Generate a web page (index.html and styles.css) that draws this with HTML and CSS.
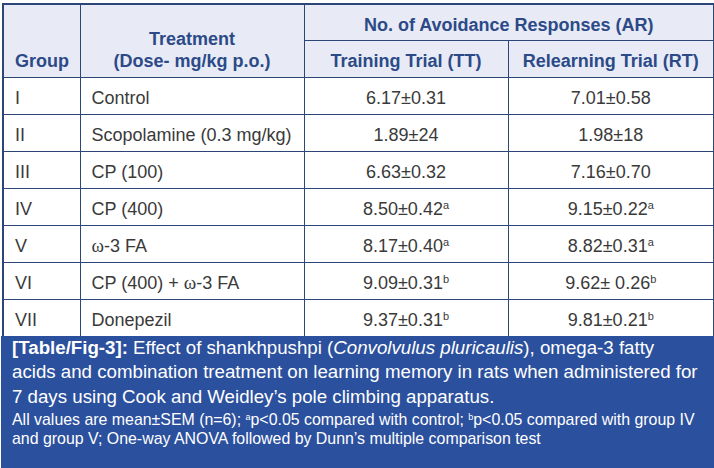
FILE: index.html
```html
<!DOCTYPE html>
<html>
<head>
<meta charset="utf-8">
<link rel="stylesheet" href="styles.css">
</head>
<body>
<div class="fig">
  <table class="data">
    <colgroup>
      <col class="c-group">
      <col class="c-treat">
      <col class="c-tt">
      <col class="c-rt">
    </colgroup>
    <thead>
      <tr class="r-top">
        <th rowspan="2" class="h-group">Group</th>
        <th rowspan="2" class="h-treat">Treatment<br>(Dose- mg/kg p.o.)</th>
        <th colspan="2" class="h-ar">No. of Avoidance Responses (AR)</th>
      </tr>
      <tr>
        <th class="h-sub">Training Trial (TT)</th>
        <th class="h-sub">Relearning Trial (RT)</th>
      </tr>
    </thead>
    <tbody>
      <tr><td>I</td><td>Control</td><td class="v">6.17±0.31</td><td class="v">7.01±0.58</td></tr>
      <tr><td>II</td><td>Scopolamine (0.3 mg/kg)</td><td class="v">1.89±24</td><td class="v">1.98±18</td></tr>
      <tr><td>III</td><td>CP (100)</td><td class="v">6.63±0.32</td><td class="v">7.16±0.70</td></tr>
      <tr><td>IV</td><td>CP (400)</td><td class="v">8.50±0.42<sup>a</sup></td><td class="v">9.15±0.22<sup>a</sup></td></tr>
      <tr><td>V</td><td><span class="om">ω</span>-3 FA</td><td class="v">8.17±0.40<sup>a</sup></td><td class="v">8.82±0.31<sup>a</sup></td></tr>
      <tr><td>VI</td><td>CP (400) + <span class="om">ω</span>-3 FA</td><td class="v">9.09±0.31<sup>b</sup></td><td class="v">9.62± 0.26<sup>b</sup></td></tr>
      <tr><td>VII</td><td>Donepezil</td><td class="v">9.37±0.31<sup>b</sup></td><td class="v">9.81±0.21<sup>b</sup></td></tr>
    </tbody>
  </table>
  <div class="caption">
    <p class="cap-main"><b>[Table/Fig-3]:</b> Effect of shankhpushpi (<i>Convolvulus pluricaulis</i>), omega-3 fatty<br>acids and combination treatment on learning memory in rats when administered for<br>7 days using Cook and Weidley’s pole climbing apparatus.</p>
    <p class="cap-note">All values are mean±SEM (n=6); <sup>a</sup>p&lt;0.05 compared with control; <sup>b</sup>p&lt;0.05 compared with group IV<br>and group V; One-way ANOVA followed by Dunn’s multiple comparison test</p>
  </div>
</div>
</body>
</html>
```

FILE: styles.css
```css
html, body {
  margin: 0;
  padding: 0;
  background: #ffffff;
}
body {
  width: 714px;
  height: 468px;
  overflow: hidden;
  font-family: "Liberation Sans", Arial, sans-serif;
}
.fig {
  padding-top: 3px;
}
.data {
  margin-left: 2px;
  width: 711px;
  border-collapse: collapse;
  table-layout: fixed;
  border: 2px solid #2c4677;
  border-bottom: none;
}
.c-group { width: 77px; }
.c-treat { width: 224px; }
.c-tt { width: 204px; }
.c-rt { width: 206px; }
.data th, .data td {
  border: 1px solid #2c4677;
  height: 37px;
  padding: 0 11px;
  box-sizing: border-box;
}
.data .r-top th {
  height: 36px;
}
.data th {
  background: #e8ebf5;
  color: #2c4a88;
  font-size: 18px;
  font-weight: bold;
  text-align: center;
  line-height: 22px;
  padding-top: 5px;
}
.h-group {
  vertical-align: bottom;
  padding-bottom: 5px !important;
}
.h-treat {
  vertical-align: bottom;
  padding-bottom: 5px !important;
}
.data td {
  color: #3a3a3a;
  font-size: 18px;
  line-height: 20px;
  text-align: left;
  padding-top: 4px;
}
.data td.v {
  text-align: center;
}
.data sup {
  font-size: 11px;
  line-height: 0;
  vertical-align: 6px;
}
.om {
  font-family: "Liberation Serif", "Times New Roman", serif;
  font-size: 19px;
}
.caption {
  margin-left: 1px;
  margin-top: -1px;
  background: #2b509e;
  color: #ffffff;
  padding: 0 6px 0 11px;
  height: 134px;
  box-sizing: border-box;
  white-space: nowrap;
}
.caption p {
  margin: 0;
}
.cap-main {
  font-size: 18.7px;
  line-height: 24.5px;
}
.cap-note {
  font-size: 15.9px;
  line-height: 19px;
  margin-top: 1px !important;
}
.cap-note sup {
  font-size: 9px;
  line-height: 0;
  vertical-align: 5px;
}
```
